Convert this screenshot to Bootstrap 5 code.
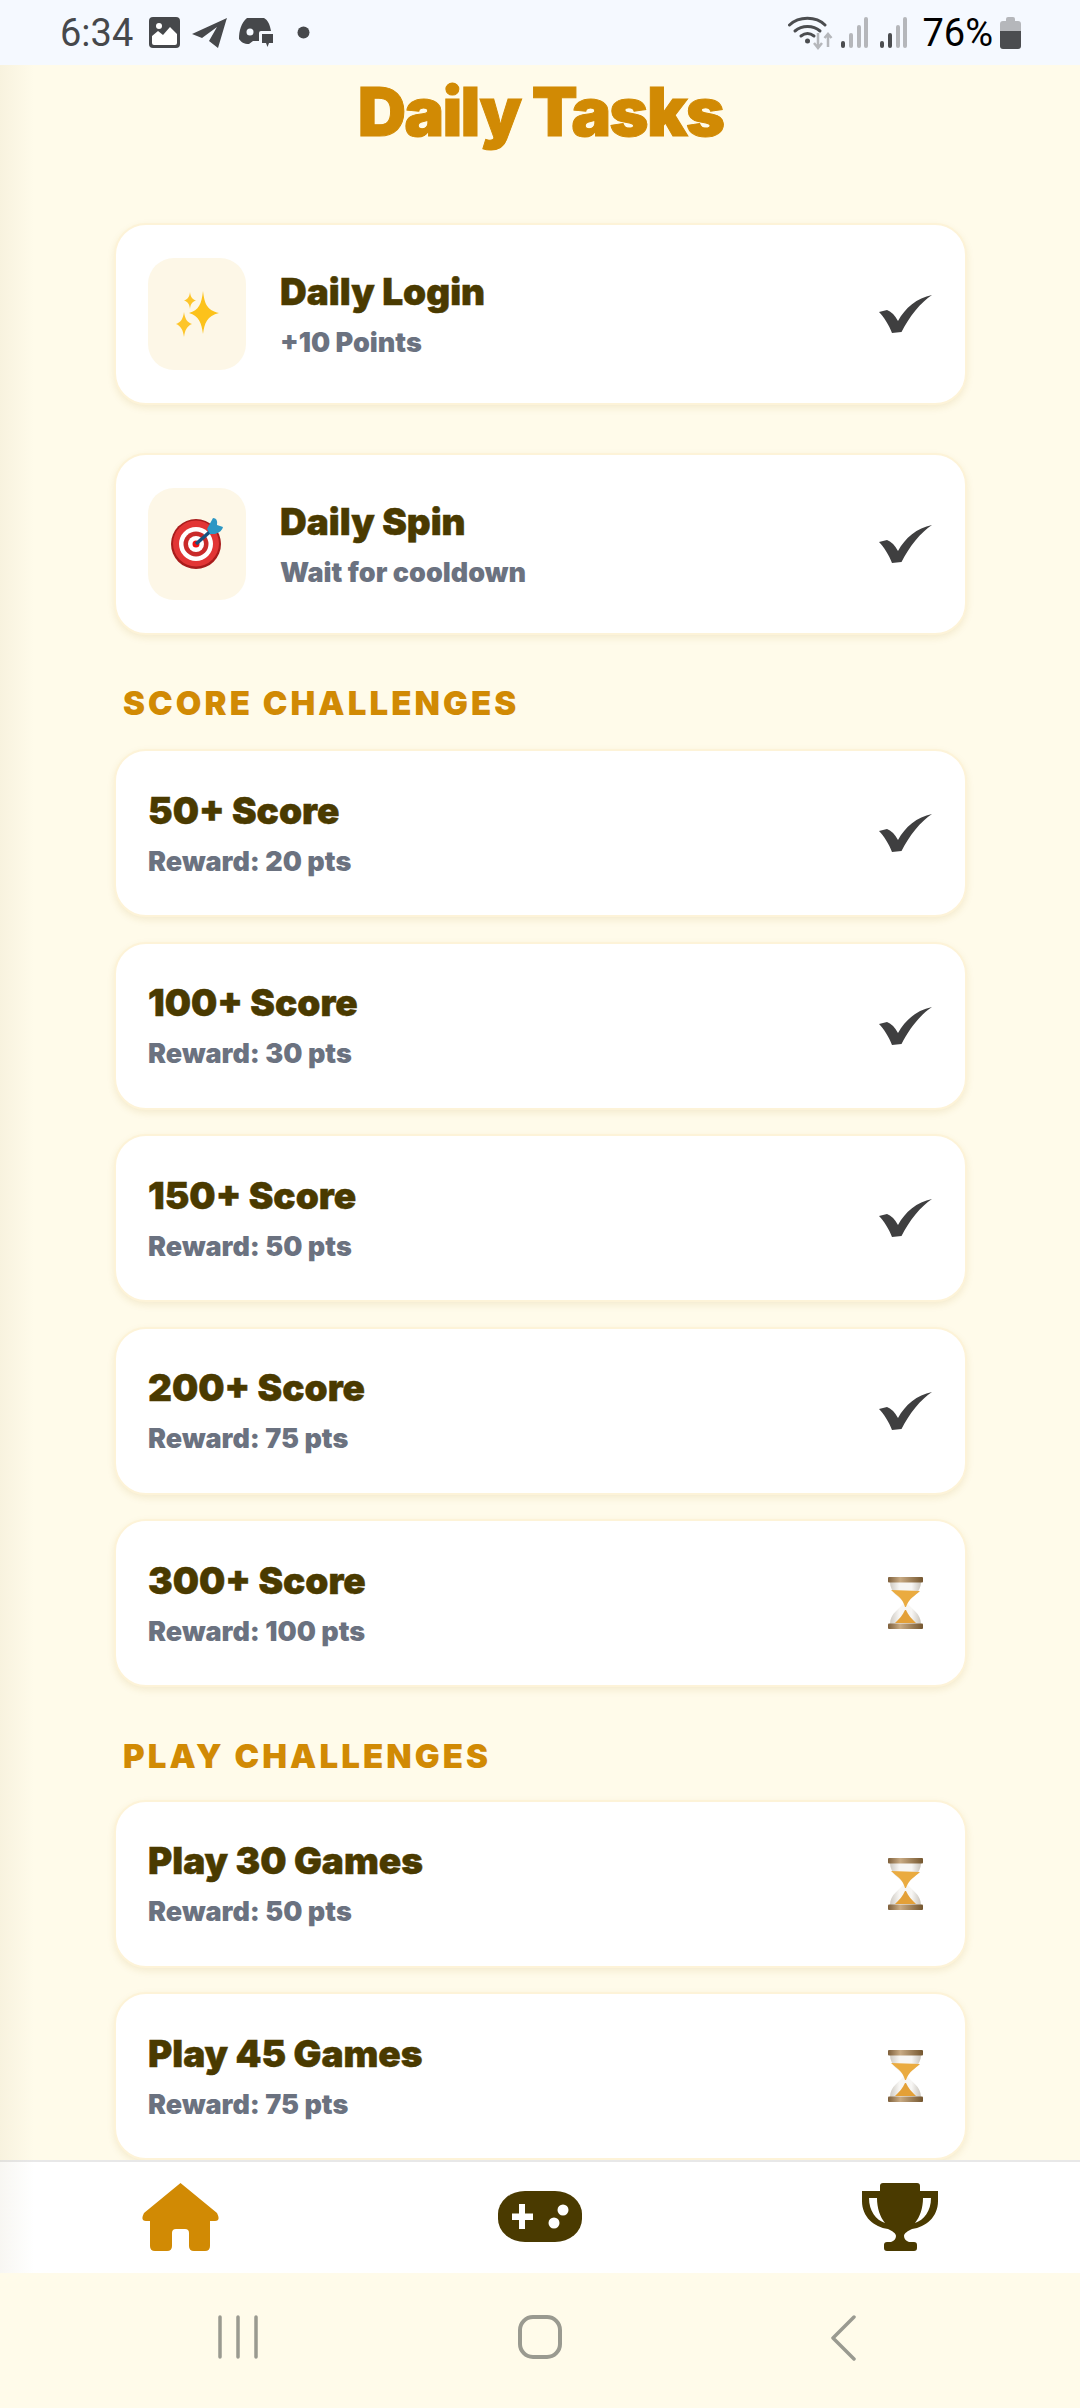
<!DOCTYPE html>
<html>
<head>
  <title>Daily Tasks</title>
  <link href="https://cdn.jsdelivr.net/npm/bootstrap@5.3.0/dist/css/bootstrap.min.css" rel="stylesheet">
  <style>
    html, body { height: 100%; }
    body {
      width: 1080px;
      height: 2408px;
      overflow: hidden;
      background-color: #fffbea;
      font-family: Inter, Lato, "Liberation Sans", sans-serif;
    }
    .status-bar {
      height: 65px;
      background-color: #f5f9ff;
      padding: 0 59px 0 60px;
      font-family: Roboto, "Liberation Sans", sans-serif;
      font-size: 38px;
      line-height: 1;
    }
    .status-time { color: #46484b; width: 89px; }
    .status-pct { color: #000; margin: 0 7px 0 15px; }
    .st-gap { margin-left: 12px; }
    .app-area { height: 2208px; position: relative; }
    .app-area::before {
      content: "";
      position: absolute;
      top: 0; left: 0; bottom: 0;
      width: 34px;
      background: linear-gradient(to right, rgba(130, 105, 40, .06), rgba(130, 105, 40, 0));
      z-index: 5;
      pointer-events: none;
    }
    .scroll-area { height: 2095px; overflow: hidden; padding: 0 113px 0 114px; }
    .page-title {
      color: #d18a04;
      font-size: 67px;
      font-weight: 900;
      line-height: 1;
      letter-spacing: -1.8px;
      margin: 13px 0 0;
      height: 145px;
      -webkit-text-stroke: 1px #d18a04;
    }
    .task-card {
      flex-direction: row;
      align-items: center;
      justify-content: space-between;
      height: 168px;
      margin-bottom: 24.5px;
      padding: 0 33px 0 32px;
      background: #fff;
      border: 2px solid #fdf3d8;
      border-radius: 32px;
      box-shadow: 0 3px 7px rgba(170, 130, 30, .13);
    }
    .task-card.with-icon { height: 182px; margin-bottom: 48px; }
    .task-icon {
      width: 98px;
      height: 112px;
      margin-right: 34px;
      background: #fdf7e7;
      border-radius: 26px;
    }
    .task-name {
      color: #4a3a00;
      font-size: 37px;
      font-weight: 900;
      line-height: 46px;
      -webkit-text-stroke: .5px #4a3a00;
    }
    .task-sub {
      color: #6b7280;
      font-size: 27px;
      font-weight: 900;
      line-height: 34px;
      margin-top: 11px;
    }
    .section-label {
      color: #d18a04;
      font-size: 33px;
      font-weight: 900;
      line-height: 40px;
      letter-spacing: 3.1px;
      margin: 0 0 26px 9px;
      text-transform: uppercase;
    }
    .label-play { margin-top: 48.5px; margin-bottom: 24px; }
    .state-slot { width: 53px; }
    .bottom-nav {
      height: 113px;
      background: #fff;
      border-top: 2px solid #e8e8e8;
      padding-top: 21px;
    }
    .nav-slot { width: 361.5px; }
    .system-nav { height: 135px; padding-top: 42px; }
    .sys-slot { width: 302.5px; }
  </style>
</head>
<body>

  <svg width="0" height="0" class="d-block position-absolute">
    <defs>
      <symbol id="check" viewBox="0 0 53 38">
        <path d="M0 17 L8 15 Q14 17 19 26 C26 13 38 3 53 0 C42 7 30 22 22.5 37 L13 38 C10 30 5 22 0 17Z" fill="#3f3f40"/>
      </symbol>
      <linearGradient id="capGrad" x1="0" x2="1" y1="0" y2="0">
        <stop offset="0" stop-color="#7d5f3b"/>
        <stop offset=".35" stop-color="#c9ab84"/>
        <stop offset="1" stop-color="#74562f"/>
      </linearGradient>
      <linearGradient id="glassGrad" x1="0" x2="1" y1="0" y2="0">
        <stop offset="0" stop-color="#cfcac2"/>
        <stop offset=".3" stop-color="#f7f6f4"/>
        <stop offset=".7" stop-color="#f7f6f4"/>
        <stop offset="1" stop-color="#c9c4bc"/>
      </linearGradient>
      <symbol id="hourglass" viewBox="0 0 35 52">
        <path d="M2 5 C2 16 12 20 15.500 26 C12 32 2 36 2 47 H33 C33 36 23 32 19.500 26 C23 20 33 16 33 5Z" fill="url(#glassGrad)"/>
        <path d="M3 13 L32 14 C27 19 21 21 18 30 H17 C15 21 8 18 3 13Z" fill="#eaab40"/>
        <path d="M7 46 C11 42 15 38 17 33 H18 C20 38 24 42 28 46Z" fill="#e3a038"/>
        <rect width="35" height="5.500" rx="1" fill="url(#capGrad)"/>
        <rect y="46.500" width="35" height="5.500" rx="1" fill="url(#capGrad)"/>
      </symbol>
      <symbol id="sparkles" viewBox="0 0 43 46">
        <path d="M27 0 C28.500 13 31 19 43 22 C31 25 28.500 32 27 43 C25.500 32 23 25 13 22 C23 19 25.500 13 27 0Z" fill="#fcc21b"/>
        <path d="M14 1 C14.600 6 16 8 20 9.500 C16 11 14.600 13 14 18 C13.400 13 12 11 8 9.500 C12 8 13.400 6 14 1Z" fill="#fdc52a"/>
        <path d="M8 21 C9 28 11 31 16 33 C11 35 9 39 8 46 C7 39 5 35 0 33 C5 31 7 28 8 21Z" fill="#fdc52a"/>
      </symbol>
      <symbol id="target" viewBox="0 0 52 52">
        <circle cx="25" cy="26" r="25" fill="#a81c1c"/>
        <circle cx="25" cy="25.500" r="23" fill="#e23535"/>
        <circle cx="25" cy="26" r="17" fill="#fff"/>
        <circle cx="25" cy="26" r="12.500" fill="#c92a2a"/>
        <circle cx="25" cy="26" r="8" fill="#fff"/>
        <circle cx="25" cy="26" r="3.500" fill="#f01010"/>
        <path d="M25 26 L42 11" stroke="#17507f" stroke-width="3.500"/>
        <path d="M36 11 L42 0 Q47 0 46 7 L52 9 Q51 14 44 16 L39 16Z" fill="#2d97c4"/>
      </symbol>
      <symbol id="home" viewBox="0 0 77 68">
        <path d="M38.500 0 L75 30 Q79 38 73 38 H68 V63 Q68 68 63 68 H52 Q47 68 47 63 V50 Q47 46 43 46 H34 Q30 46 30 50 V63 Q30 68 25 68 H13 Q8 68 8 63 V38 H4 Q-2 38 2 30Z" fill="#d18a04"/>
      </symbol>
      <symbol id="gamepad" viewBox="0 0 84 51">
        <rect width="84" height="51" rx="27" ry="23" fill="#4a3a00"/>
        <path d="M21 13 H27 V22.500 H35 V29 H27 V38 H21 V29 H14 V22.500 H21Z" fill="#fff"/>
        <circle cx="65" cy="19" r="5.500" fill="#fff"/>
        <circle cx="56" cy="32" r="5.500" fill="#fff"/>
      </symbol>
      <symbol id="trophy" viewBox="0 0 76 68">
        <path fill-rule="evenodd" d="M18 3 Q18 0 21 0 H55 Q58 0 58 3 V8 H76 V18 C76 34 64 44 50 46 C46 48 42 50 42 53 C42 56 44 58 47 59 H52 Q55 59 55 62 V65 Q55 68 52 68 H25 Q22 68 22 65 V62 Q22 59 25 59 H29 C32 58 34 56 34 53 C34 50 30 48 26 46 C12 44 0 34 0 18 V8 H18Z M7 15 H15 C15 25 18 34 23 40 C14 37 7 28 7 15Z M69 15 H61 C61 25 58 34 53 40 C62 37 69 28 69 15Z" fill="#4a3a00"/>
      </symbol>
    </defs>
  </svg>

  <!-- status bar -->
  <div class="status-bar d-flex align-items-center justify-content-between">
    <div class="d-flex align-items-center">
      <span class="status-time">6:34</span>
      <svg width="31" height="31" viewBox="0 0 31 31">
        <rect width="31" height="31" rx="4" fill="#46484b"/>
        <rect x="3" y="3" width="25" height="25" rx="2" fill="#fff"/>
        <path d="M3 3 H28 V17 L21 10 L14 18 L9 14 L3 19Z" fill="#46484b"/>
        <circle cx="10" cy="9" r="3" fill="#fff"/>
      </svg>
      <svg width="35" height="31" viewBox="0 0 35 31" class="st-gap">
        <path d="M0 17 L35 1 Q35 1 34 4 L26 31 L17 24 L25 10 L10 21Z" fill="#46484b"/>
      </svg>
      <svg width="34" height="32" viewBox="0 0 34 32" class="st-gap">
        <path d="M8 1 H25 C29 3 31 8 32 14 H22 Q20 14 20 16 V24 L14 24 L10 27 C5 27 2 25 0 22 C0 14 2 6 8 1Z" fill="#46484b"/>
        <circle cx="11" cy="15" r="3.500" fill="#f5f9ff"/>
        <path d="M23 17 H34 V26 H30 L28.500 30 L27 26 H23Z" fill="#46484b"/>
      </svg>
      <svg width="13" height="13" viewBox="0 0 13 13" class="ms-4">
        <circle cx="6.500" cy="6.500" r="6" fill="#46484b"/>
      </svg>
    </div>
    <div class="d-flex align-items-center">
      <svg width="45" height="34" viewBox="0 0 45 34">
        <g fill="none" stroke="#4b4d50" stroke-width="3" stroke-linecap="round">
          <path d="M1.500 9 C11 0 28 0 37 9"/>
          <path d="M7 15 C14 9 25 9 32 15"/>
          <path d="M13 20 C17 17 22 17 26 20"/>
        </g>
        <circle cx="19.500" cy="25" r="2.500" fill="#4b4d50"/>
        <path d="M30 17 V31 M26 27 L30 32 L34 27" fill="none" stroke="#b5b7bb" stroke-width="2.500"/>
        <path d="M40 31 V19 M36.500 22 L40 18 L43.500 22" fill="none" stroke="#b5b7bb" stroke-width="2.500"/>
      </svg>
      <svg width="27" height="31" viewBox="0 0 27 31" class="ms-2">
        <rect x="0" y="24" width="4" height="7" rx="2" fill="#4b4d50"/>
        <rect x="8" y="16" width="4" height="15" rx="2" fill="#b5b7bb"/>
        <rect x="16" y="8" width="4" height="23" rx="2" fill="#b5b7bb"/>
        <rect x="23" y="0" width="4" height="31" rx="2" fill="#b5b7bb"/>
      </svg>
      <svg width="27" height="31" viewBox="0 0 27 31" class="st-gap">
        <rect x="0" y="24" width="4" height="7" rx="2" fill="#4b4d50"/>
        <rect x="8" y="16" width="4" height="15" rx="2" fill="#4b4d50"/>
        <rect x="16" y="8" width="4" height="23" rx="2" fill="#b5b7bb"/>
        <rect x="23" y="0" width="4" height="31" rx="2" fill="#b5b7bb"/>
      </svg>
      <span class="status-pct">76%</span>
      <svg width="21" height="32" viewBox="0 0 21 32">
        <path d="M6 2 Q6 0 8 0 H13 Q15 0 15 2 V4 H18 Q21 4 21 7 V14 H0 V7 Q0 4 3 4 H6Z" fill="#b5b7bb"/>
        <path d="M0 14 H21 V29 Q21 32 18 32 H3 Q0 32 0 29Z" fill="#4b4d50"/>
      </svg>
    </div>
  </div>

  <div class="app-area">
    <div class="scroll-area">
      <h1 class="page-title text-center">Daily Tasks</h1>

      <div class="card task-card with-icon">
        <div class="d-flex align-items-center">
          <div class="task-icon d-flex align-items-center justify-content-center">
            <svg width="43" height="46"><use href="#sparkles"/></svg>
          </div>
          <div>
            <div class="task-name">Daily Login</div>
            <div class="task-sub">+10 Points</div>
          </div>
        </div>
        <div class="state-slot d-flex justify-content-center"><svg width="53" height="38"><use href="#check"/></svg></div>
      </div>

      <div class="card task-card with-icon">
        <div class="d-flex align-items-center">
          <div class="task-icon d-flex align-items-center justify-content-center">
            <svg width="52" height="52"><use href="#target"/></svg>
          </div>
          <div>
            <div class="task-name">Daily Spin</div>
            <div class="task-sub">Wait for cooldown</div>
          </div>
        </div>
        <div class="state-slot d-flex justify-content-center"><svg width="53" height="38"><use href="#check"/></svg></div>
      </div>

      <div class="section-label">Score Challenges</div>

      <div class="card task-card">
        <div><div class="task-name">50+ Score</div><div class="task-sub">Reward: 20 pts</div></div>
        <div class="state-slot d-flex justify-content-center"><svg width="53" height="38"><use href="#check"/></svg></div>
      </div>
      <div class="card task-card">
        <div><div class="task-name">100+ Score</div><div class="task-sub">Reward: 30 pts</div></div>
        <div class="state-slot d-flex justify-content-center"><svg width="53" height="38"><use href="#check"/></svg></div>
      </div>
      <div class="card task-card">
        <div><div class="task-name">150+ Score</div><div class="task-sub">Reward: 50 pts</div></div>
        <div class="state-slot d-flex justify-content-center"><svg width="53" height="38"><use href="#check"/></svg></div>
      </div>
      <div class="card task-card">
        <div><div class="task-name">200+ Score</div><div class="task-sub">Reward: 75 pts</div></div>
        <div class="state-slot d-flex justify-content-center"><svg width="53" height="38"><use href="#check"/></svg></div>
      </div>
      <div class="card task-card">
        <div><div class="task-name">300+ Score</div><div class="task-sub">Reward: 100 pts</div></div>
        <div class="state-slot d-flex justify-content-center"><svg width="35" height="52"><use href="#hourglass"/></svg></div>
      </div>

      <div class="section-label label-play">Play Challenges</div>

      <div class="card task-card">
        <div><div class="task-name">Play 30 Games</div><div class="task-sub">Reward: 50 pts</div></div>
        <div class="state-slot d-flex justify-content-center"><svg width="35" height="52"><use href="#hourglass"/></svg></div>
      </div>
      <div class="card task-card">
        <div><div class="task-name">Play 45 Games</div><div class="task-sub">Reward: 75 pts</div></div>
        <div class="state-slot d-flex justify-content-center"><svg width="35" height="52"><use href="#hourglass"/></svg></div>
      </div>
    </div>

    <!-- bottom tabs -->
    <div class="bottom-nav d-flex justify-content-center">
      <div class="nav-slot d-flex justify-content-center align-items-start"><svg width="77" height="68"><use href="#home"/></svg></div>
      <div class="nav-slot d-flex justify-content-center align-items-start"><svg width="84" height="51" class="mt-2"><use href="#gamepad"/></svg></div>
      <div class="nav-slot d-flex justify-content-center align-items-start"><svg width="76" height="68"><use href="#trophy"/></svg></div>
    </div>
  </div>

  <!-- android nav -->
  <div class="system-nav d-flex justify-content-center">
    <div class="sys-slot d-flex justify-content-center">
      <svg width="40" height="44" viewBox="0 0 40 44">
        <path d="M2 2 V42 M20 2 V42 M38 2 V42" stroke="#9a9a90" stroke-width="3.500" stroke-linecap="round"/>
      </svg>
    </div>
    <div class="sys-slot d-flex justify-content-center">
      <svg width="44" height="44" viewBox="0 0 44 44">
        <rect x="2" y="2" width="40" height="40" rx="13" fill="none" stroke="#9a9a90" stroke-width="4"/>
      </svg>
    </div>
    <div class="sys-slot d-flex justify-content-center">
      <svg width="26" height="46" viewBox="0 0 26 46">
        <path d="M24 2 L3 23 L24 44" fill="none" stroke="#9a9a90" stroke-width="3.500" stroke-linecap="round" stroke-linejoin="round"/>
      </svg>
    </div>
  </div>

</body>
</html>
